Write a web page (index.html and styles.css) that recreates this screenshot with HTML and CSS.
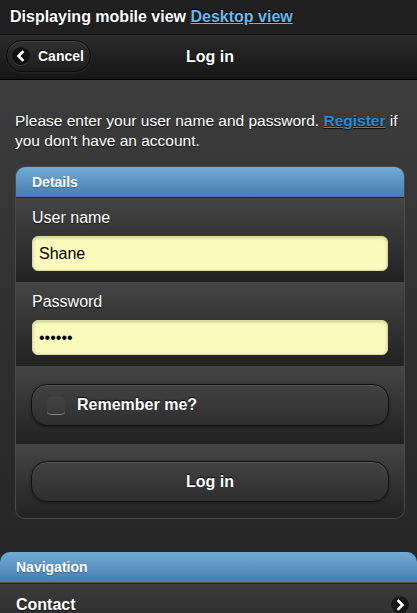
FILE: index.html
```html
<!DOCTYPE html>
<html lang="en">
<head>
<meta charset="utf-8">
<title>Log in</title>
<link rel="stylesheet" href="styles.css">
</head>
<body>
<div class="page">
  <div class="topbar">Displaying mobile view <a href="#" class="topbar-link">Desktop view</a></div>
  <header class="hdr">
    <a href="#" class="back-btn">
      <span class="back-ico"><svg width="18" height="18" viewBox="0 0 18 18"><path d="M10.5 5 L6.5 9 L10.5 13" fill="none" stroke="#fff" stroke-width="2.6" stroke-linecap="square"/></svg></span>
      Cancel
    </a>
    <h1 class="hdr-title">Log in</h1>
  </header>
  <main class="content">
    <p class="intro">Please enter your user name and password. <a href="#" class="reg-link">Register</a> if you don't have an account.</p>
    <section class="card">
      <div class="card-head">Details</div>
      <ul class="fields">
        <li class="field">
          <label class="field-label" for="user">User name</label>
          <input class="field-input" id="user" type="text" value="Shane">
        </li>
        <li class="field">
          <label class="field-label" for="pass">Password</label>
          <input class="field-input" id="pass" type="password" value="secret">
        </li>
        <li class="field field-btnrow">
          <label class="btn check-btn"><span class="check-box"></span>Remember me?</label>
        </li>
        <li class="field field-btnrow field-last">
          <button class="btn submit-btn" type="button">Log in</button>
        </li>
      </ul>
    </section>
  </main>
  <section class="nav">
    <div class="nav-head">Navigation</div>
    <a href="#" class="nav-item">Contact
      <span class="nav-ico"><svg width="18" height="18" viewBox="0 0 18 18"><path d="M7.5 5 L11.5 9 L7.5 13" fill="none" stroke="#fff" stroke-width="2.6" stroke-linecap="square"/></svg></span>
    </a>
  </section>
</div>
</body>
</html>
```
FILE: styles.css
```css
* { box-sizing: border-box; }
html, body { margin: 0; padding: 0; }
body {
  font-family: "Liberation Sans", Arial, Helvetica, sans-serif;
  font-size: 16px;
  color: #fff;
  background: #262626;
  overflow: hidden;
}
.page { width: 417px; height: 613px; overflow: hidden; }

.topbar {
  height: 35px;
  padding: 0 10px;
  line-height: 34px;
  font-weight: bold;
  background: #202020;
  border-bottom: 1px solid #141414;
  text-shadow: 0 -1px 1px #000;
}
.topbar-link { color: #6fb6e6; text-decoration: underline; }

.hdr {
  position: relative;
  height: 45px;
  background: linear-gradient(#2b2b2b, #151515);
  border-bottom: 1px solid #000;
  display: flex;
  align-items: center;
  justify-content: center;
}
.hdr-title {
  margin: 0;
  font-size: 16px;
  font-weight: bold;
  text-shadow: 0 -1px 1px #000;
  padding-left: 3px;
}
.back-btn {
  position: absolute;
  left: 6px;
  top: 5px;
  height: 32px;
  width: 85px;
  display: flex;
  align-items: center;
  gap: 8px;
  padding-left: 5px;
  border: 1px solid #0c0c0c;
  border-radius: 16px;
  background: linear-gradient(#303030, #1c1c1c);
  box-shadow: inset 0 1px 0 rgba(255,255,255,.12), 0 1px 2px rgba(255,255,255,.08);
  color: #fff;
  text-decoration: none;
  font-size: 14px;
  font-weight: bold;
  text-shadow: 0 -1px 1px #000;
}
.back-ico, .nav-ico {
  width: 18px;
  height: 18px;
  border-radius: 50%;
  background: rgba(0,0,0,.55);
  display: flex;
  box-shadow: 0 1px 0 rgba(255,255,255,.15);
}

.content {
  padding: 15px 12px 33px 15px;
  background: linear-gradient(#3d3d3d 0%, #303030 50%, #262626 100%);
}
.intro {
  margin: 16px 0 15px;
  font-size: 15.5px;
  line-height: 20px;
  text-shadow: 0 1px 1px #111;
}
.reg-link { color: #2a8bd0; font-weight: bold; text-decoration: underline; }

.card {
  border: 1px solid #4a4a4a;
  border-radius: 10px;
  overflow: hidden;
  background: #2a2a2a;
}
.card-head {
  height: 30px;
  line-height: 30px;
  padding-left: 16px;
  font-size: 14px;
  font-weight: bold;
  background: linear-gradient(#6facd5, #497bae);
  text-shadow: 0 1px 1px #3e6790;
}
.fields { list-style: none; margin: 0; padding: 0; }
.field {
  padding: 10px 15px 10px 16px;
  border-top: 1px solid #222;
  background: linear-gradient(#454545, #222);
}
.field-label {
  display: block;
  line-height: 20px;
  margin-bottom: 8px;
  text-shadow: 0 1px 1px #111;
}
.field-input {
  display: block;
  width: 356px;
  height: 35px;
  margin: 0;
  padding: 0 6px;
  border: 1px solid #d8d8a0;
  border-radius: 6px;
  background: #fafabd;
  color: #000;
  font-family: "Liberation Sans", Arial, sans-serif;
  font-size: 16px;
  box-shadow: inset 0 1px 3px rgba(0,0,0,.2);
  outline: none;
}
.field-btnrow { padding: 18px 16px 17px 15px; }
.field-last { padding-top: 17px; padding-bottom: 16px; }

.btn {
  display: flex;
  align-items: center;
  width: 358px;
  border: 1px solid #111;
  border-radius: 16px;
  background: linear-gradient(#424242, #2e2e2e);
  box-shadow: inset 0 1px 0 rgba(255,255,255,.12), 0 1px 3px rgba(0,0,0,.4);
  color: #fff;
  font-family: "Liberation Sans", Arial, sans-serif;
  font-size: 16px;
  font-weight: bold;
  text-shadow: 0 -1px 1px #000;
}
.check-btn { height: 42px; padding-left: 15px; gap: 12px; }
.check-box {
  width: 18px;
  height: 18px;
  border-radius: 4px;
  background: rgba(255,255,255,.04);
  box-shadow: inset 0 0 1px rgba(0,0,0,.4), 0 1px 0 rgba(255,255,255,.4);
}
.submit-btn { height: 41px; justify-content: center; padding: 0; margin: 0; }

.nav {
  border-radius: 10px 10px 0 0;
  overflow: hidden;
}
.nav-head {
  height: 31px;
  line-height: 30px;
  padding-left: 16px;
  font-size: 14px;
  font-weight: bold;
  background: linear-gradient(#6facd5, #497bae);
  border-bottom: 1px solid #555;
  text-shadow: 0 1px 1px #3e6790;
}
.nav-item {
  display: flex;
  align-items: center;
  justify-content: space-between;
  height: 42px;
  padding: 0 8px 0 16px;
  background: linear-gradient(#3c3c3c, #2c2c2c);
  border-top: 1px solid #222;
  color: #fff;
  text-decoration: none;
  font-weight: bold;
  text-shadow: 0 1px 1px #111;
}
```
